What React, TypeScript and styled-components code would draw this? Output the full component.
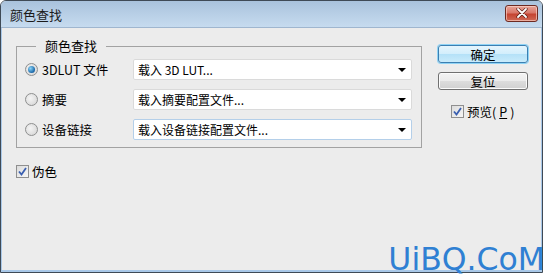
import styled, { createGlobalStyle } from "styled-components";

const GlobalStyle = createGlobalStyle`
  html, body {
    margin: 0;
    padding: 0;
    background: #ffffff;
  }
  body {
    font-family: "Noto Sans CJK SC", "Noto Sans", sans-serif;
    font-size: 12px;
    color: #000;
  }
`;

const Stage = styled.div`
  position: relative;
  width: 545px;
  height: 275px;
  overflow: hidden;
`;

const Window = styled.div`
  width: 541px;
  height: 271px;
  border: 1px solid #3f4a56;
  border-radius: 6px 6px 0 0;
  display: flex;
  flex-direction: column;
  overflow: hidden;
  background: #ececec;
`;

const TitleBar = styled.div`
  height: 26px;
  flex: none;
  display: flex;
  align-items: center;
  justify-content: space-between;
  padding: 0 4px 0 9px;
  background: linear-gradient(to bottom, #a9c2dc 0%, #b8cfe6 50%, #c6dbef 100%);
  border-bottom: 1px solid #9fb6cf;
`;

const Title = styled.span`
  font-size: 13px;
  color: #1b1b1b;
`;

const CloseButton = styled.div`
  width: 31px;
  height: 15px;
  margin-top: -2px;
  border: 1px solid #6d2a22;
  border-radius: 3px;
  display: flex;
  align-items: center;
  justify-content: center;
  background: linear-gradient(to bottom, #e7a497 0%, #d9786a 45%, #c54431 55%, #cf6a56 100%);
  box-shadow: inset 0 0 0 1px rgba(255, 220, 210, 0.6);
`;

const Body = styled.div`
  flex: 1;
  position: relative;
  display: flex;
  align-items: flex-start;
  gap: 16px;
  padding: 10px 0 0 14px;
  border-left: 1px solid #a9c8e8;
  border-right: 1px solid #a9c8e8;
  border-bottom: 2px solid #a9c8e8;
`;

const LeftColumn = styled.div`
  display: flex;
  flex-direction: column;
  gap: 14px;
`;

const Group = styled.fieldset`
  margin: 0;
  width: 406px;
  box-sizing: border-box;
  border: 1px solid #a2a2a2;
  padding: 5px 9px 7px 8px;
  display: flex;
  flex-direction: column;
  gap: 9px;
`;

const Legend = styled.legend`
  margin-left: 11px;
  padding: 0 9px;
  font-size: 13px;
  line-height: 16px;
`;

const Row = styled.div`
  display: flex;
  align-items: center;
  height: 21px;
`;

const RadioLabel = styled.label`
  width: 108px;
  flex: none;
  display: flex;
  align-items: center;
  gap: 4px;
  font-size: 12.5px;
`;

const RadioDot = styled.span<{ $checked?: boolean }>`
  width: 11px;
  height: 11px;
  border-radius: 50%;
  border: 1px solid #8e8f8f;
  background: radial-gradient(circle at 40% 40%, #f4f4f4, #d2d2d2);
  display: flex;
  align-items: center;
  justify-content: center;
  &::after {
    content: "";
    display: ${(p) => (p.$checked ? "block" : "none")};
    width: 7px;
    height: 7px;
    border-radius: 50%;
    background: radial-gradient(circle at 35% 35%, #8ad4f8, #1a67a8 70%, #0c3f74);
  }
`;

const Select = styled.div<{ $focused?: boolean }>`
  flex: 1;
  height: 21px;
  box-sizing: border-box;
  display: flex;
  align-items: center;
  justify-content: space-between;
  padding: 0 4px;
  background: #ffffff;
  border: 1px solid ${(p) => (p.$focused ? "#b4cfe9" : "#dadada")};
  border-radius: 2px;
  font-size: 12px;
`;

const Arrow = styled.span`
  width: 0;
  height: 0;
  border-left: 4px solid transparent;
  border-right: 4px solid transparent;
  border-top: 4px solid #000;
  margin-right: 1px;
`;

const CheckRow = styled.label`
  display: flex;
  align-items: center;
  gap: 3px;
  font-size: 12.5px;
`;

const CheckBox = styled.span`
  width: 11px;
  height: 11px;
  border: 1px solid #8f8f8f;
  background: linear-gradient(135deg, #dcdcdc, #f6f6f6);
  display: flex;
  align-items: center;
  justify-content: center;
`;

const RightColumn = styled.div`
  display: flex;
  flex-direction: column;
  padding-top: 7px;
  width: 90px;
`;

const Button = styled.div<{ $primary?: boolean }>`
  height: 18px;
  box-sizing: border-box;
  display: flex;
  align-items: center;
  justify-content: center;
  font-size: 12.5px;
  border-radius: 3px;
  border: 1px solid ${(p) => (p.$primary ? "#3c7fb1" : "#707070")};
  background: ${(p) =>
    p.$primary
      ? "linear-gradient(to bottom, #e6f5fd 0%, #d2eefc 50%, #b4e1f8 51%, #c9ebfb 100%)"
      : "linear-gradient(to bottom, #f3f3f3 0%, #ebebeb 50%, #dddddd 51%, #d0d0d0 100%)"};
  box-shadow: ${(p) => (p.$primary ? "0 0 0 1px #8fd3f5" : "inset 0 0 0 1px #fbfbfb")};
  margin-bottom: 9px;
`;

const PreviewRow = styled(CheckRow)`
  margin-top: 3px;
  margin-left: 13px;
`;

const Underlined = styled.span`
  text-decoration: underline;
`;

const Watermark = styled.div`
  position: absolute;
  right: 0;
  bottom: 0;
  font-family: "DejaVu Sans", sans-serif;
  font-size: 31.5px;
  color: #2f80d3;
  line-height: 1;
`;

const Tick = () => (
  <svg width="9" height="9" viewBox="0 0 9 9">
    <path d="M1 4.5 L3.5 7.5 L8 1" fill="none" stroke="#3a5fb0" strokeWidth="1.8" />
  </svg>
);

const CloseGlyph = () => (
  <svg width="12" height="10" viewBox="0 0 12 10">
    <path d="M2 1 L10 9 M10 1 L2 9" stroke="#5a1c14" strokeWidth="3.2" strokeLinecap="round" />
    <path d="M2 1 L10 9 M10 1 L2 9" stroke="#ffffff" strokeWidth="1.8" strokeLinecap="round" />
  </svg>
);

const rows = [
  { label: "3DLUT 文件", value: "载入 3D LUT...", checked: true },
  { label: "摘要", value: "载入摘要配置文件...", checked: false },
  { label: "设备链接", value: "载入设备链接配置文件...", checked: false, focused: true },
];

const App = () => (
  <Stage>
    <GlobalStyle />
    <Window>
      <TitleBar>
        <Title>颜色查找</Title>
        <CloseButton>
          <CloseGlyph />
        </CloseButton>
      </TitleBar>
      <Body>
        <LeftColumn>
          <Group>
            <Legend>颜色查找</Legend>
            {rows.map((r) => (
              <Row key={r.label}>
                <RadioLabel>
                  <RadioDot $checked={r.checked} />
                  {r.label}
                </RadioLabel>
                <Select $focused={r.focused}>
                  {r.value}
                  <Arrow />
                </Select>
              </Row>
            ))}
          </Group>
          <CheckRow>
            <CheckBox>
              <Tick />
            </CheckBox>
            伪色
          </CheckRow>
        </LeftColumn>
        <RightColumn>
          <Button $primary>确定</Button>
          <Button>复位</Button>
          <PreviewRow>
            <CheckBox>
              <Tick />
            </CheckBox>
            预览(<Underlined>P</Underlined>)
          </PreviewRow>
        </RightColumn>
      </Body>
    </Window>
    <Watermark>UiBQ.CoM</Watermark>
  </Stage>
);

export default App;
